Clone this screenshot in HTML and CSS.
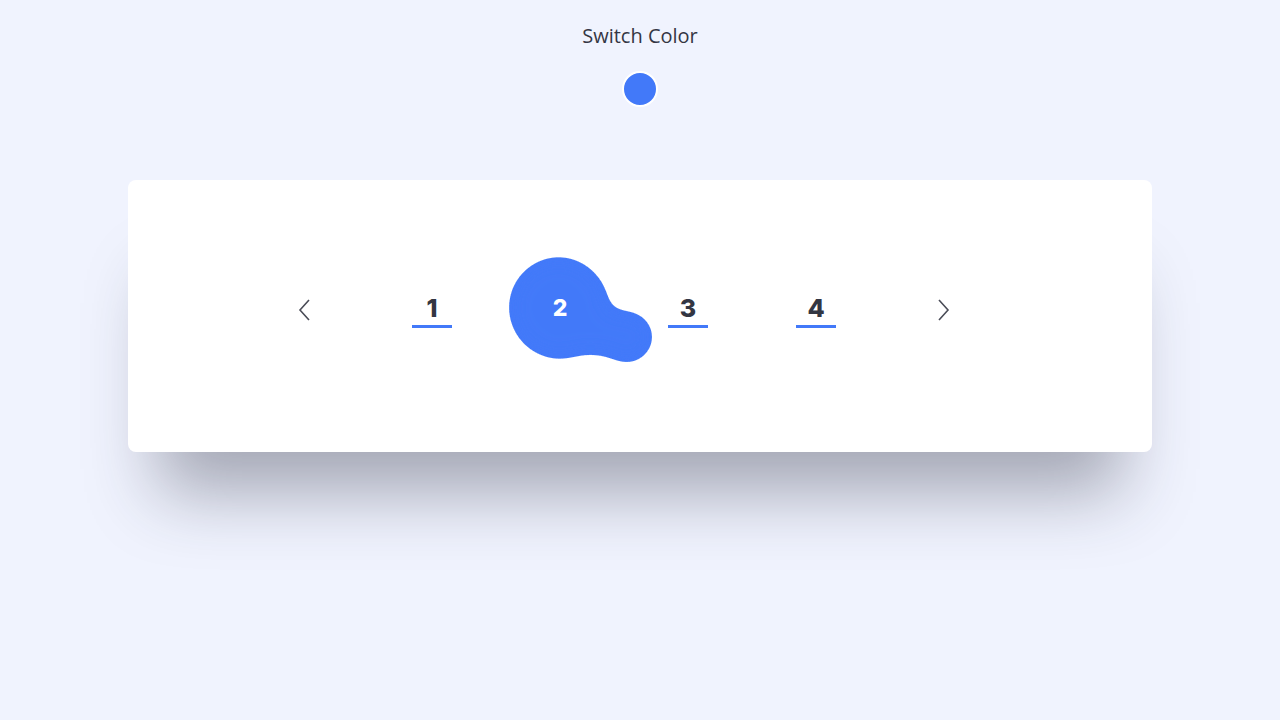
FILE: index.html
```html
<!DOCTYPE html>
<html lang="en">
<head>
<meta charset="UTF-8">
<meta name="viewport" content="width=device-width, initial-scale=1.0">
<title>Gooey Pagination</title>
<link rel="stylesheet" href="styles.css">
</head>
<body>

<div class="switcher">
  <div class="switcher-title">Switch Color</div>
  <button class="color-dot" title="Switch color"></button>
</div>

<div class="card">
  <ul class="pagination">
    <li class="page-arrow">
      <svg width="14" height="24" viewBox="0 0 14 24"><path d="M12 2 L3 12 L12 22" fill="none" stroke="#4a4c57" stroke-width="1.6"/></svg>
    </li>
    <li class="page-item"><span class="page-num">1</span></li>
    <li class="page-item active">
      <svg class="blob" width="200" height="160" viewBox="0 0 200 160">
        <defs>
          <filter id="goo">
            <feGaussianBlur in="SourceGraphic" stdDeviation="9" result="blur"/>
            <feColorMatrix in="blur" mode="matrix" values="1 0 0 0 0  0 1 0 0 0  0 0 1 0 0  0 0 0 22 -9"/>
          </filter>
        </defs>
        <g filter="url(#goo)" fill="#4279f9">
          <ellipse cx="73" cy="78" rx="49" ry="50" transform="rotate(-15 73 78)"/>
          <circle cx="141" cy="107" r="25"/>
          <path d="M88 56 Q116 80 140 84 L142 130 Q116 120 76 124 Z"/>
        </g>
      </svg>
      <span class="page-num">2</span>
    </li>
    <li class="page-item"><span class="page-num">3</span></li>
    <li class="page-item"><span class="page-num">4</span></li>
    <li class="page-arrow">
      <svg width="14" height="24" viewBox="0 0 14 24"><path d="M2 2 L11 12 L2 22" fill="none" stroke="#4a4c57" stroke-width="1.6"/></svg>
    </li>
  </ul>
</div>

</body>
</html>
```

FILE: styles.css
```css
body {
  margin: 0;
  height: 100vh;
  font-family: "Open Sans", sans-serif;
  background-color: #f0f3fe;
}
.switcher {
  display: flex;
  flex-direction: column;
  align-items: center;
  padding-top: 22px;
}
.switcher-title {
  font-size: 20px;
  line-height: 28px;
  color: #343644;
}
.color-dot {
  margin-top: 21px;
  width: 36px;
  height: 36px;
  border: 2px solid #fff;
  border-radius: 50%;
  background-color: #4279f9;
  cursor: pointer;
}
.card {
  margin: 73px auto 0;
  width: 1024px;
  height: 272px;
  box-sizing: border-box;
  padding-bottom: 12px;
  border-radius: 8px;
  background-color: #fff;
  box-shadow: 0 70px 70px -30px rgba(40, 42, 60, 0.38);
  display: flex;
  align-items: center;
  justify-content: center;
}
.pagination {
  list-style: none;
  margin: 0;
  padding: 0 32px 0 0;
  display: flex;
}
.pagination li {
  width: 128px;
  height: 60px;
  display: flex;
  align-items: center;
  justify-content: center;
  position: relative;
}
.page-num {
  position: relative;
  width: 40px;
  text-align: center;
  font-family: "Inter", sans-serif;
  font-weight: 800;
  font-size: 25px;
  line-height: 34px;
  color: #333642;
  border-bottom: 3px solid #4279f9;
  margin-top: -2px;
}
.active .page-num {
  color: #fff;
  font-size: 23px;
  border-bottom-color: transparent;
}
.blob {
  position: absolute;
  left: -10px;
  top: -50px;
}
```
